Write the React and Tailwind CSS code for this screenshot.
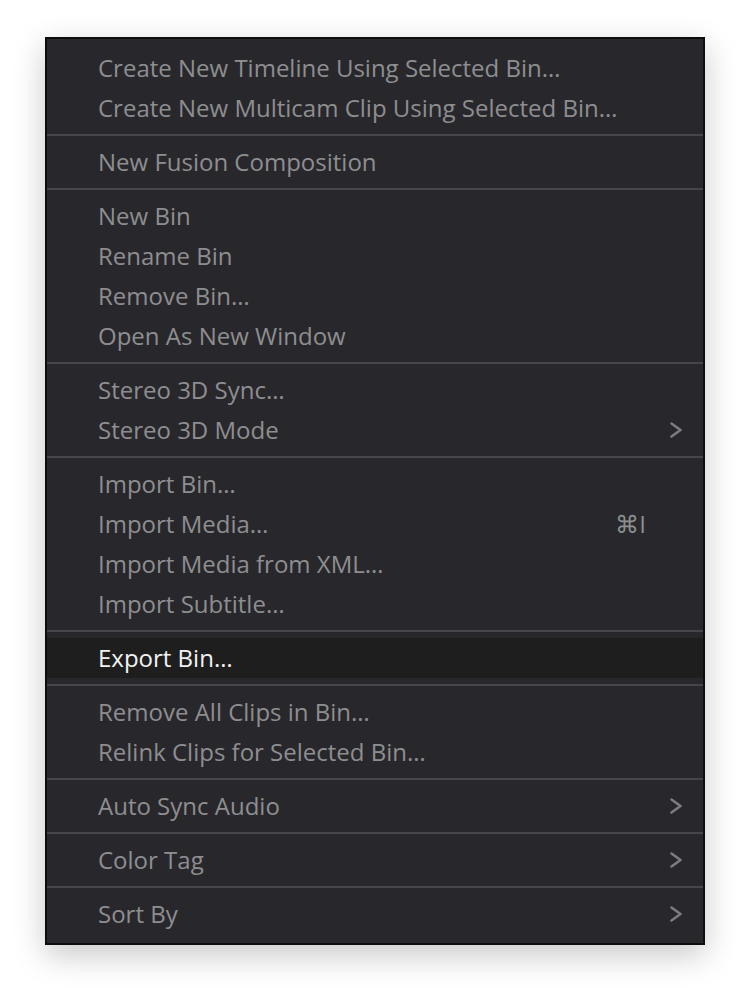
const SECTIONS = [
  [{ label: 'Create New Timeline Using Selected Bin…' }, { label: 'Create New Multicam Clip Using Selected Bin…' }],
  [{ label: 'New Fusion Composition' }],
  [{ label: 'New Bin' }, { label: 'Rename Bin' }, { label: 'Remove Bin…' }, { label: 'Open As New Window' }],
  [{ label: 'Stereo 3D Sync…' }, { label: 'Stereo 3D Mode', submenu: true }],
  [
    { label: 'Import Bin…' },
    { label: 'Import Media…', shortcut: '⌘I' },
    { label: 'Import Media from XML…' },
    { label: 'Import Subtitle…' },
  ],
  [{ label: 'Export Bin…', active: true }],
  [{ label: 'Remove All Clips in Bin…' }, { label: 'Relink Clips for Selected Bin…' }],
  [{ label: 'Auto Sync Audio', submenu: true }],
  [{ label: 'Color Tag', submenu: true }],
  [{ label: 'Sort By', submenu: true }],
]

function Chevron() {
  return (
    <svg width="12" height="16" viewBox="0 0 12 16" fill="none">
      <polyline points="1.5,1.5 10.5,8 1.5,14.5" stroke="#7d7d80" strokeWidth="2.5" strokeLinecap="round" strokeLinejoin="round" />
    </svg>
  )
}

function MenuItem({ item }) {
  return (
    <div
      className={`flex h-10 items-center pl-[51px] pr-[21px] ${
        item.active ? 'bg-[#1e1e1f] text-[#f2f2f2]' : 'text-[#8e8e90]'
      }`}
    >
      <span className="flex-1">{item.label}</span>
      {item.shortcut && <span className="mr-[36px]">{item.shortcut}</span>}
      {item.submenu && <Chevron />}
    </div>
  )
}

export default function App() {
  return (
    <div className="min-h-screen bg-white pt-[37px]" style={{ fontFamily: '"Open Sans", "Noto Sans", sans-serif' }}>
      <div className="mx-auto w-[660px] border-2 border-[#0d0d0e] bg-[#28282c] py-[3px] text-[24px] leading-10 shadow-[0_10px_30px_rgba(0,0,0,0.22)]">
        {SECTIONS.map((section, i) => (
          <div key={i} className={`py-[6px] ${i > 0 ? 'border-t-2 border-[#45474b]' : ''}`}>
            {section.map((item) => (
              <MenuItem key={item.label} item={item} />
            ))}
          </div>
        ))}
      </div>
    </div>
  )
}
